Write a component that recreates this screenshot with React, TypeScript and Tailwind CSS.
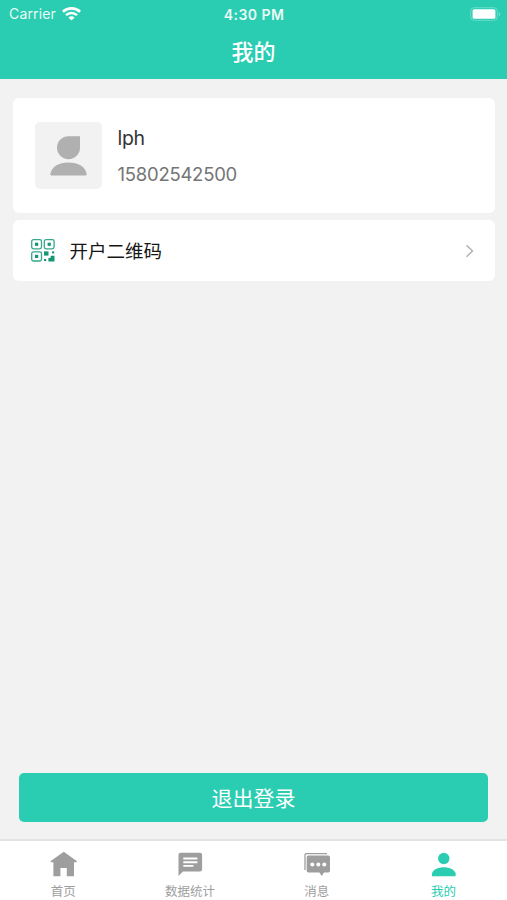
import type { ReactNode } from "react";

function WifiIcon() {
  return (
    <svg width="19" height="14" viewBox="0 0 19 14" fill="none">
      <path d="M0.9 4.7C5.7 0.3 13.3 0.3 18.1 4.7" stroke="white" strokeWidth="2.7" />
      <path d="M4 8.2C7.1 5.3 11.9 5.3 15 8.2" stroke="white" strokeWidth="2.5" />
      <path d="M6.4 10.6C8.2 8.9 10.8 8.9 12.6 10.6L9.5 13.6Z" fill="white" />
    </svg>
  );
}

function BatteryIcon() {
  return (
    <svg width="31" height="14" viewBox="0 0 31 14" fill="none">
      <rect x="0.7" y="0.7" width="26.6" height="12.6" rx="3.4" stroke="white" strokeOpacity="0.3" />
      <rect x="2.6" y="2.2" width="22.8" height="9.6" rx="1.6" fill="white" />
      <path d="M28.8 4.9C30.6 5.5 30.6 8.5 28.8 9.1Z" fill="white" fillOpacity="0.4" />
    </svg>
  );
}

function AvatarIcon() {
  return (
    <svg width="37" height="40" viewBox="0 0 37 40" fill="#b0b0b0">
      <path d="M18.5 0.2H30V11.7A11.5 11.5 0 1 1 18.5 0.2Z" />
      <path d="M0.3 38C1.6 30.7 8.6 26.4 18.5 26.4S35.4 30.7 36.7 38Q36.8 39.4 35.6 39.4H1.4Q0.2 39.4 0.3 38Z" />
    </svg>
  );
}

function QrIcon() {
  return (
    <svg width="24" height="23" viewBox="0 0 24 23" fill="none">
      <g stroke="#37a78b" strokeWidth="1.3">
        <rect x="0.7" y="0.7" width="9.8" height="9.2" rx="1.8" />
        <rect x="13.3" y="0.7" width="9.8" height="9.2" rx="1.8" />
        <rect x="0.7" y="12.8" width="9.8" height="9.2" rx="1.8" />
      </g>
      <g fill="#149873">
        <rect x="4" y="3.7" width="3.2" height="3.2" />
        <rect x="16.6" y="3.7" width="3.2" height="3.2" />
        <rect x="4" y="15.8" width="3.2" height="3.2" />
        <rect x="13" y="12.4" width="4.5" height="4.2" />
        <rect x="21" y="12.4" width="2.2" height="2" />
        <rect x="13" y="20" width="2.2" height="2" />
        <path d="M19.6 16.8H23.5V22.6H17.4V19H19.6Z" />
      </g>
    </svg>
  );
}

function HomeIcon() {
  return (
    <svg width="28" height="26" viewBox="0 0 28 26" fill="currentColor">
      <path d="M14.8 0.7L28 10.3L27.5 11.2H25V25.3H17.8V17H11.4V25.3H4.4V11.2H1.9L1.4 10.3Z" />
    </svg>
  );
}

function StatsIcon() {
  return (
    <svg width="28" height="26" viewBox="0 0 28 26">
      <path
        d="M4.6 1.8H24Q26.1 1.8 26.1 3.9V18.5Q26.1 20.6 24 20.6H6.9L2.5 25.1V3.9Q2.5 1.8 4.6 1.8Z"
        fill="currentColor"
      />
      <path d="M7.3 7.5H21.4M7.3 11.2H21.4M7.3 14.9H17.4" stroke="white" strokeWidth="1.9" />
    </svg>
  );
}

function MessageIcon() {
  return (
    <svg width="28" height="26" viewBox="0 0 28 26" fill="none">
      <path d="M2 18.9V4Q2 2.6 3.4 2.6H24" stroke="currentColor" strokeWidth="1.3" />
      <path
        d="M5.3 4.6H25.4Q27 4.6 27 6.2V19.8Q27 21.4 25.4 21.4H21L18.7 25L16.4 21.4H5.3Q3.7 21.4 3.7 19.8V6.2Q3.7 4.6 5.3 4.6Z"
        fill="currentColor"
      />
      <g fill="white">
        <circle cx="9.3" cy="13.4" r="2" />
        <circle cx="15.3" cy="13.4" r="2" />
        <circle cx="21.3" cy="13.4" r="2" />
      </g>
    </svg>
  );
}

function UserIcon() {
  return (
    <svg width="28" height="26" viewBox="0 0 28 26" fill="currentColor">
      <circle cx="13.8" cy="7.5" r="5.7" />
      <path d="M2 25.3V22.3C3 18.2 9 16.2 13.8 16.2S24.6 18.2 25.6 22.3V25.3Z" />
    </svg>
  );
}

interface Tab {
  label: string;
  icon: ReactNode;
  active?: boolean;
}

const tabs: Tab[] = [
  { label: "首页", icon: <HomeIcon /> },
  { label: "数据统计", icon: <StatsIcon /> },
  { label: "消息", icon: <MessageIcon /> },
  { label: "我的", icon: <UserIcon />, active: true },
];

function Header() {
  return (
    <header className="h-[79px] shrink-0 bg-[#2acdb1] text-white">
      <div className="grid h-[27px] grid-cols-3 items-center pr-[6px] pl-[9px]">
        <div className="flex items-center gap-[6px]">
          <span className="text-[14px] tracking-[0.15px] opacity-90">Carrier</span>
          <WifiIcon />
        </div>
        <span className="pt-px pr-[2px] text-center text-[14px] font-semibold tracking-[0.45px] opacity-90">
          4:30 PM
        </span>
        <div className="flex justify-end">
          <BatteryIcon />
        </div>
      </div>
      <h1 className="text-center text-[22px] leading-[50px] font-medium">我的</h1>
    </header>
  );
}

function ProfileCard() {
  return (
    <section className="flex h-[115px] items-center rounded-[6px] bg-white pl-[22px]">
      <div className="flex size-[67px] items-center justify-center rounded-[5px] bg-[#f2f2f2]">
        <AvatarIcon />
      </div>
      <div className="ml-[16px] flex flex-col gap-[12px] pt-px">
        <p className="text-[19.5px] leading-6 tracking-[-0.3px] text-[#333]">lph</p>
        <p className="text-[18.5px] leading-6 tracking-[-0.25px] text-[#757575]">15802542500</p>
      </div>
    </section>
  );
}

function QrCodeRow() {
  return (
    <button className="mt-[7px] flex h-[61px] w-full items-center rounded-[6px] bg-white pr-[21px] pl-[18px]">
      <QrIcon />
      <span className="ml-[15px] pt-px text-[18.5px] leading-6 text-[#161616]">开户二维码</span>
      <svg className="ml-auto" width="9" height="14" viewBox="0 0 9 14" fill="none">
        <path d="M1.5 1.2L7.5 7L1.5 12.8" stroke="#b2b2b2" strokeWidth="1.5" />
      </svg>
    </button>
  );
}

function TabBar() {
  return (
    <nav className="grid h-[61px] shrink-0 grid-cols-4 border-t-2 border-[#e2e2e2] bg-white">
      {tabs.map((tab) => (
        <button
          key={tab.label}
          data-active={tab.active}
          className="flex flex-col items-center justify-start pt-[10px] text-[#9e9e9e] data-[active=true]:text-[#2acdb1]"
        >
          {tab.icon}
          <span className="mt-[7px] text-[12.5px] leading-4">{tab.label}</span>
        </button>
      ))}
    </nav>
  );
}

export default function App() {
  return (
    <div className="flex h-[900px] w-full flex-col bg-[#f2f2f2] font-[Inter,'Noto_Sans_CJK_SC',sans-serif]">
      <Header />
      <main className="flex flex-1 flex-col px-[12.5px] pt-[19px] pb-[17px]">
        <ProfileCard />
        <QrCodeRow />
        <button className="mx-[6.5px] mt-auto h-[49px] rounded-[5px] bg-[#2acdb1] pt-[2px] text-[21px] text-white">
          退出登录
        </button>
      </main>
      <TabBar />
    </div>
  );
}
